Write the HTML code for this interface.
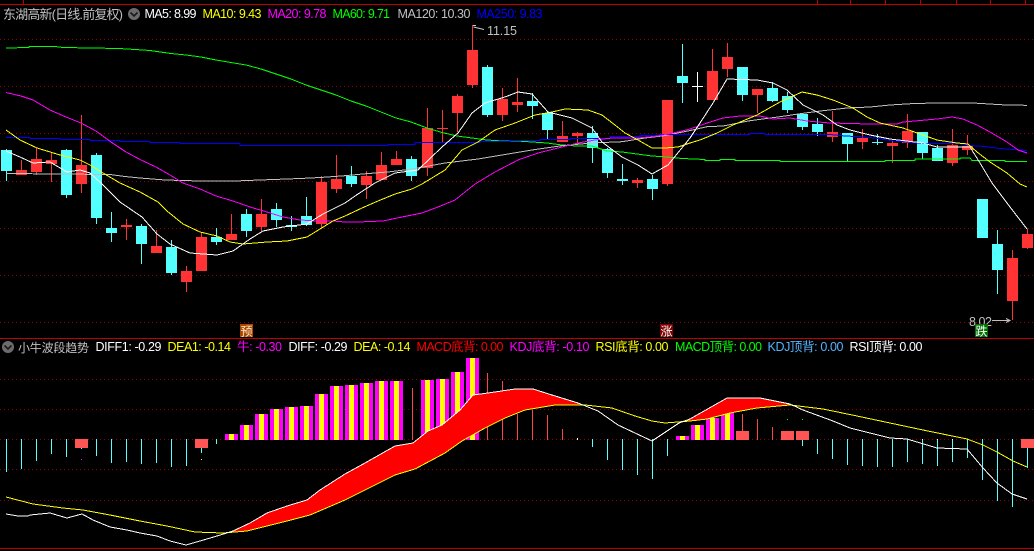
<!DOCTYPE html>
<html><head><meta charset="utf-8"><title>东湖高新</title>
<style>
html,body{margin:0;padding:0;background:#000;width:1034px;height:551px;overflow:hidden}
svg{display:block}
text{font-family:"Liberation Sans","WenQuanYi Zen Hei","Noto Sans CJK SC",sans-serif;font-size:12.5px}
</style></head><body>
<svg width="1034" height="551" viewBox="0 0 1034 551" xmlns="http://www.w3.org/2000/svg">
<rect width="1034" height="551" fill="#000"/>
<g shape-rendering="crispEdges">
<!-- frame -->
<path d="M0 4.5H1034M23.5 0V4M817.5 0V4M850.5 0V4M885.5 0V4M920.5 0V4M956.5 0V4M990.5 0V4M1025.5 0V4" stroke="#c00000" stroke-width="1" fill="none"/>
<path d="M0 338.5H1034M0 548.5H1034" stroke="#c00000" stroke-width="1" fill="none"/>
<!-- grid -->
<path d="M0 39.5H1034M0 86.5H1034M0 133.5H1034M0 181.5H1034M0 228.5H1034M0 275.5H1034M0 322.5H1034M0 379.5H1034M0 409.5H1034M0 439.5H1034M0 469.5H1034M0 500.5H1034" stroke="#900000" stroke-width="1" stroke-dasharray="1 3" fill="none"/>
<!-- red wicks -->
<path stroke="#ff3333" fill="none" d="M21.5 160V175M36.5 148V175M51.5 153V182M81.5 115V193M126.5 219V240M156.5 230V253M186.5 266V292M201.5 232V271M231.5 214V240M261.5 199V231M321.5 176V228M336.5 155V193M366.5 171V199M381.5 152V180M396.5 151V165M427.5 108V176M442.5 110V143M457.5 94V132M472.5 25V88M502.5 88V121M517.5 78V112M562.5 121V142M577.5 132V144M637.5 178V188M667.5 100V186M712.5 49V100M727.5 43V77M757.5 89V113M832.5 111V142M862.5 129V149M892.5 141V163M907.5 114V148M952.5 129V166M967.5 135V155M1012.5 250V320M1027.5 229V249"/>
<!-- red bodies -->
<path fill="#ff3333" d="M16 170h11v5h-11zM31 159h11v13h-11zM46 160h11v4h-11zM76 165h11v19h-11zM121 225h11v2h-11zM151 246h11v7h-11zM181 271h11v11h-11zM196 237h11v34h-11zM226 234h11v6h-11zM256 214h11v13h-11zM316 182h11v42h-11zM331 179h11v10h-11zM361 176h11v9h-11zM376 165h11v15h-11zM391 159h11v6h-11zM422 128h11v40h-11zM437 128h11v1h-11zM452 96h11v17h-11zM467 50h11v35h-11zM497 99h11v16h-11zM512 102h11v3h-11zM557 136h11v6h-11zM572 133h11v3h-11zM632 180h11v3h-11zM662 100h11v84h-11zM707 71h11v29h-11zM722 57h11v12h-11zM752 89h11v6h-11zM827 132h11v5h-11zM857 138h11v4h-11zM887 143h11v3h-11zM902 131h11v12h-11zM947 145h11v18h-11zM962 146h11v4h-11zM1007 258h11v43h-11zM1022 234h11v14h-11z"/>
<!-- cyan wicks -->
<path stroke="#54ffff" fill="none" d="M6.5 149V181M66.5 149V198M96.5 153V224M111.5 212V242M141.5 224V264M171.5 240V275M216.5 228V245M246.5 209V237M276.5 203V227M291.5 216V231M306.5 197V226M351.5 166V187M411.5 156V181M487.5 65V117M532.5 93V119M547.5 111V139M592.5 126V163M607.5 148V178M622.5 164V185M652.5 175V200M682.5 44V103M742.5 67V101M772.5 82V102M787.5 92V113M802.5 113V130M817.5 118V136M847.5 133V161M877.5 134V145M922.5 132V159M937.5 145V161M982.5 199V238M997.5 230V294"/>
<!-- cyan bodies -->
<path fill="#54ffff" d="M1 150h11v21h-11zM61 150h11v45h-11zM91 155h11v63h-11zM106 228h11v5h-11zM136 226h11v18h-11zM166 247h11v26h-11zM211 237h11v5h-11zM241 214h11v17h-11zM271 209h11v11h-11zM286 225h11v2h-11zM301 216h11v9h-11zM346 176h11v8h-11zM406 159h11v17h-11zM482 67h11v48h-11zM527 101h11v5h-11zM542 113h11v17h-11zM587 133h11v15h-11zM602 149h11v24h-11zM617 179h11v2h-11zM647 179h11v10h-11zM677 76h11v7h-11zM737 67h11v28h-11zM767 88h11v13h-11zM782 96h11v14h-11zM797 114h11v13h-11zM812 124h11v8h-11zM842 133h11v11h-11zM872 142h11v1h-11zM917 132h11v21h-11zM932 148h11v13h-11zM977 199h11v39h-11zM992 244h11v26h-11z"/>
<!-- doji white -->
<path stroke="#fff" fill="none" d="M697.5 72V102"/><rect x="692" y="86" width="11" height="1" fill="#fff"/>
</g>
<!-- moving averages -->
<g fill="none" stroke-width="1" shape-rendering="crispEdges">
<polyline stroke="#00ff00" points="6,48 29,47.5 29,46.5 55,46.5 63,47.5 119,48.5 135,49.5 150,50.5 171,53.5 186,55 201,57 216,60 231,62.5 246,65 261,69 276,74 291,79 306,85 321,90 336,95 351,101 366,106 381,112 396,118 411,122 427,128 442,132.5 457,136 472,138 487,140 502,141 517,141 532,142 547,143 562,145 577,146 592,146 607,151 622,152 637,154 652,156 667,157 682,158.5 705,159.5 705,160.5 720,160.5 720,159.5 735,159.5 735,160.5 780,160.5 780,161.5 885,161.5 885,160.5 915,160.5 915,159 960,159 960,158 970,158 972,160.5 1005,160.5 1005,161.5 1027,161.5"/>
<polyline stroke="#c0c0c0" points="6,173.5 110,174.5 125,176.5 140,178 165,180 200,181 235,181 260,180 300,178.5 320,177.5 345,175.7 366,173.7 388,172 412,169 445,163 478,159 502,155 532,150 562,145.7 592,143 622,141.7 645,138 662,136 688,131 707,126.7 723,126 750,120.7 780,116.7 803,113.3 823,110.7 847,108 870,107 890,105 917,103.3 973,103 1006,105 1027,105.3"/>
<polyline stroke="#0000ff" points="6,137.5 30,137.5 30,138.5 60,138.5 60,139.5 90,139.5 90,140.5 120,140.5 120,141.5 150,141.5 150,142.5 180,142.5 180,143.5 240,143.5 240,145.5 388,145.5 388,144.5 415,144.5 415,142.5 480,142.5 480,141.5 510,141.5 510,140.5 540,140.5 540,139.5 570,139.5 570,138.5 610,138.5 610,136.5 640,136.5 640,135.5 660,135.5 660,134.5 750,134.5 750,133.5 765,133.5 765,134.5 830,134.5 845,136 860,136.7 875,138 890,140.5 900,141.5 925,143.5 960,143.5 970,145.5 985,146.5 1000,148.5 1027,150.5"/>
<polyline stroke="#ff00ff" points="6,92.5 21,96 33,100 50,110 66,117 81,123 96,131 111,142 126,152 141,160 156,167 170,175 183,183 200,189 216,196 233,201 250,207 267,212 283,217 300,220 317,221 333,221 345,222 358,222 383,221 402,217 422,213 438,207 455,200 475,184 495,172 518,160 538,153 558,148 578,143 595,140 612,138 638,138 658,136 678,132 690,129 707,123 723,118 740,116 760,116 773,119 790,118 807,121 830,123 870,124 897,124 903,122 915,121 937,119 952,117 963,119 977,125 990,132 1007,142 1018,150 1027,153"/>
<polyline stroke="#ffff00" points="6,130 20,140 37,148 60,155 80,160 90,165 103,173 120,183 140,192 158,202 167,211 183,224 200,232 217,236 230,242 243,244 267,242 287,241 307,237 320,229 333,221 345,216 362,208 378,201 395,194 412,189 422,184 445,170 462,150 478,142 495,130 515,123 535,115 552,112 565,109 588,110 602,115 615,125 625,133 638,140 652,148 665,148 678,147 690,143 700,140 717,133 733,125 757,115 780,102 802,92 817,95 833,100 853,108 867,117 880,123 903,128 923,135 937,140 957,143 968,144 977,152 990,162 1007,173 1020,184 1027,187"/>
<polyline stroke="#ffffff" points="6,151 20,157 33,163 50,162 67,172 80,170 90,173 102,184 120,202 142,217 157,234 170,244 190,253 217,255 233,251 250,239 263,231 283,227 307,224 323,214 345,203 358,194 375,183 395,173 418,170 442,147 458,133 472,113 485,103 505,97 518,92 532,94 548,112 572,118 592,128 602,142 622,157 638,165 652,174 668,165 690,138 700,123 713,103 727,79 757,80 773,83 787,90 803,105 823,115 837,125 850,130 870,135 890,139 923,143 937,147 970,147 980,163 992,183 1010,207 1027,229"/>
</g>
<!-- high/low markers -->
<path d="M473 25.5h3M473.5 27L484 29.5" stroke="#c8c8c8" fill="none"/>
<text x="487" y="35" fill="#c0c0c0" textLength="30">11.15</text>
<text x="969" y="326" fill="#c0c0c0" textLength="23">8.02</text>
<path d="M992 320.5H1010M1006 318.5L1010 320.5L1006 322.5" stroke="#c0c0c0" fill="none"/>
<!-- signal boxes -->
<rect x="240" y="324" width="13" height="13" fill="#a84800"/>
<text x="240.5" y="335.5" fill="#ffe8c8" style="font-size:12px">预</text>
<rect x="660" y="324" width="13" height="13" fill="#800000"/>
<text x="660.5" y="335.5" fill="#ffffff" style="font-size:12px">涨</text>
<rect x="975" y="324" width="13" height="13" fill="#007000"/>
<text x="975.5" y="335.5" fill="#ffffff" style="font-size:12px">跌</text>
<!-- header -->
<text x="3" y="19" fill="#c0c0c0" textLength="120" style="font-size:13px">东湖高新(日线.前复权)</text>
<circle cx="134" cy="14" r="6" fill="#6c6c6c"/><path d="M130.5 12.5L134 16L137.5 12.5" stroke="#1a1a1a" stroke-width="1.6" fill="none"/>
<text x="144.5" y="18" fill="#fff" textLength="52">MA5: 8.99</text>
<text x="202.5" y="18" fill="#ff0" textLength="59">MA10: 9.43</text>
<text x="267.5" y="18" fill="#f0f" textLength="59">MA20: 9.78</text>
<text x="332.5" y="18" fill="#0f0" textLength="57.5">MA60: 9.71</text>
<text x="397.5" y="18" fill="#c0c0c0" textLength="73">MA120: 10.30</text>
<text x="476.5" y="18" fill="#0000ff" textLength="66">MA250: 9.83</text>
<!-- lower header -->
<circle cx="8" cy="347" r="6" fill="#6c6c6c"/><path d="M4.5 345.5L8 349L11.5 345.5" stroke="#1a1a1a" stroke-width="1.6" fill="none"/>
<text x="18" y="352" fill="#c0c0c0" textLength="71" style="font-size:12px">小牛波段趋势</text>
<text x="95.5" y="351" fill="#fff" textLength="66">DIFF1: -0.29</text>
<text x="167.5" y="351" fill="#ff0" textLength="63.5">DEA1: -0.14</text>
<text x="237" y="351" fill="#f0f" textLength="45">牛: -0.30</text>
<text x="288.5" y="351" fill="#fff" textLength="59">DIFF: -0.29</text>
<text x="353.5" y="351" fill="#ff0" textLength="57">DEA: -0.14</text>
<text x="416.5" y="351" fill="#f00" textLength="87">MACD底背: 0.00</text>
<text x="509.5" y="351" fill="#f0f" textLength="80">KDJ底背: -0.10</text>
<text x="595.5" y="351" fill="#ff0" textLength="73">RSI底背: 0.00</text>
<text x="675" y="351" fill="#0f0" textLength="87">MACD顶背: 0.00</text>
<text x="767.5" y="351" fill="#54b4ff" textLength="76">KDJ顶背: 0.00</text>
<text x="849.5" y="351" fill="#fff" textLength="73">RSI顶背: 0.00</text>
<g shape-rendering="crispEdges">
<!-- cyan histogram -->
<path stroke="#54ffff" fill="none" d="M6.5 439V472M21.5 439V469M36.5 439V461M51.5 439V454M66.5 439V457M81.5 439V449M96.5 439V456M111.5 439V463M126.5 439V462M141.5 439V464M156.5 439V463M171.5 439V467M186.5 439V466M201.5 439V453M216.5 439V444M592.5 439V447M607.5 439V460M622.5 439V470M637.5 439V475M652.5 439V479M667.5 439V456M802.5 439V446M817.5 439V454M832.5 439V459M847.5 439V465M862.5 439V466M877.5 439V467M892.5 439V467M907.5 439V462M922.5 439V464M937.5 439V466M952.5 439V462M967.5 439V458M982.5 439V480M997.5 439V501M1012.5 439V507M1027.5 439V468"/>
<!-- red thin histogram -->
<path stroke="#ff4444" fill="none" d="M412.5 388V440M487.5 373V440M502.5 381V440M517.5 414V440M532.5 410V440M547.5 415V440M562.5 429V440M742.5 414V440M757.5 419V440M772.5 427V440"/>
<!-- magenta bars -->
<path fill="#ff00ff" d="M225 434h13v6h-13zM240 425h13v15h-13zM255 414h13v26h-13zM270 409h13v31h-13zM285 407h13v33h-13zM300 406h13v34h-13zM315 394h13v46h-13zM330 386h13v54h-13zM345 385h13v55h-13zM360 383h13v57h-13zM375 381h13v59h-13zM390 381h13v59h-13zM421 380h13v60h-13zM436 379h13v61h-13zM451 372h13v68h-13zM466 358h13v82h-13zM676 436h13v4h-13zM691 425h13v15h-13zM706 418h13v22h-13zM721 413h13v27h-13z"/>
<path fill="#ffff00" d="M229 434h5v6h-5zM244 425h5v15h-5zM259 414h5v26h-5zM274 409h5v31h-5zM289 407h5v33h-5zM304 406h5v34h-5zM319 394h5v46h-5zM334 386h5v54h-5zM349 385h5v55h-5zM364 383h5v57h-5zM379 381h5v59h-5zM394 381h5v59h-5zM425 380h5v60h-5zM440 379h5v61h-5zM455 372h5v68h-5zM470 358h5v82h-5zM680 436h5v4h-5zM695 425h5v15h-5zM710 418h5v22h-5zM725 413h5v27h-5z"/>
<!-- blocks -->
<path fill="#ff5555" d="M75 439h13v9h-13zM195 439h13v9h-13zM736 431h13v9h-13zM781 431h13v9h-13zM796 431h13v9h-13zM1021 439h13v9h-13z"/>
<!-- dots -->
<rect x="81" y="459" width="1" height="1" fill="#f0f"/><rect x="201" y="459" width="1" height="1" fill="#ff0"/>
<rect x="577" y="438" width="1" height="2" fill="#fff"/><rect x="787" y="419" width="1" height="1" fill="#0f0"/><rect x="802" y="419" width="1" height="1" fill="#0f0"/>
<rect x="427" y="439" width="1" height="1" fill="#fff"/><rect x="442" y="439" width="1" height="1" fill="#fff"/><rect x="457" y="439" width="1" height="1" fill="#fff"/><rect x="922" y="439" width="1" height="1" fill="#fff"/><rect x="937" y="439" width="1" height="1" fill="#fff"/><rect x="952" y="439" width="1" height="1" fill="#fff"/>
<!-- red bands -->
<polygon fill="#ff0000" points="223,533 233,531 250,523 267,513 287,506 307,500 320,490 345,474 365,463 395,446 413,443 428,431 442,425 460,410 473,395 488,393 515,389 533,389 552,395 578,403 585,405 555,405 525,410 505,418 485,428 462,441 445,453 415,469 395,475 365,490 345,500 310,515 287,521 247,531"/>
<polygon fill="#ff0000" points="679,423 690,419 727,398 760,398 790,404 792,405 757,408 730,413 707,419 690,421"/>
</g>
<!-- DIFF / DEA -->
<g fill="none" shape-rendering="crispEdges">
<polyline stroke="#ffff00" points="6,497 33,504 63,508 83,510 110,515 140,521 167,526 195,532 223,533 247,531 287,521 310,515 345,500 365,490 395,475 415,469 445,453 462,441 485,428 505,418 525,410 555,405 585,405 612,408 635,416 652,421 665,423 690,421 707,419 730,413 757,408 790,405 823,409 857,416 890,423 923,430 967,439 983,445 997,452 1013,461 1027,467"/>
<polyline stroke="#ffffff" points="6,514 18,516 28,516 30,515 50,513 67,518 82,514 93,520 110,527 127,530 140,533 157,536 170,541 186,545 200,541 217,536 233,531 250,523 267,513 287,506 307,500 320,490 345,474 365,463 395,446 413,443 428,431 442,425 460,410 473,395 488,393 515,389 533,389 552,395 578,403 598,411 618,425 652,441 679,423 690,419 727,398 760,398 790,404 803,410 833,421 850,428 890,438 907,439 937,448 967,449 983,468 997,483 1012,494 1027,499"/>
</g>
</svg>
</body></html>
